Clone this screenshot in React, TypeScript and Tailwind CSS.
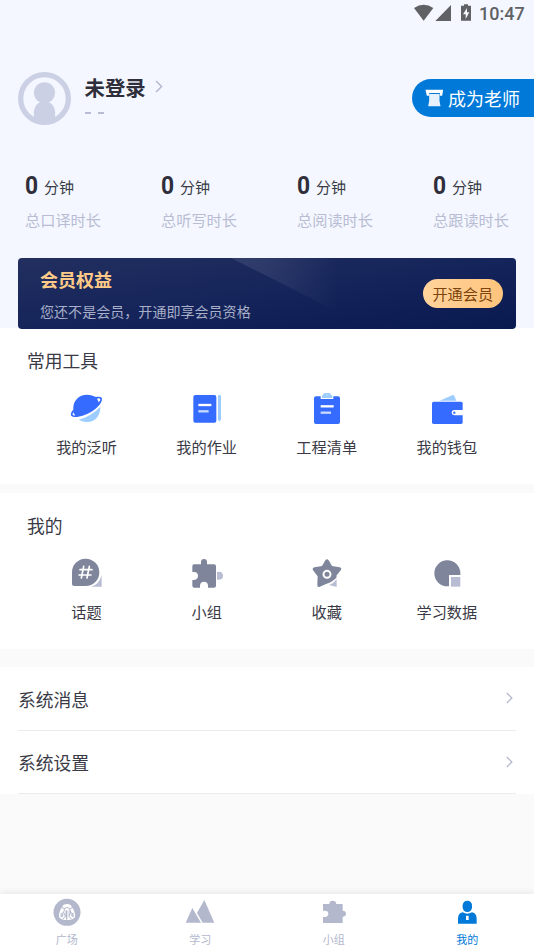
import React from "react";

const cjk = "font-['Noto_Sans_CJK_SC','Noto_Sans',sans-serif]";

function Chevron({ className }: { className: string }) {
  return (
    <svg viewBox="0 0 24 40" className={className} fill="none" stroke="#b4b8cd" strokeWidth="4.5">
      <path d="M3 3 L20 20 L3 37" />
    </svg>
  );
}

function StatusBar() {
  return (
    <div className="flex h-[27px] justify-end">
      <svg viewBox="40 0 180 81" className="h-[27px] w-[60px]" fill="#606164">
        <path d="M40 24 Q69 4 98 24 L69 62 Z" />
        <path d="M151 15 V63 H104 Z" />
        <path fillRule="evenodd" d="M190 13 H202 V17 H211 V62 H181 V17 H190 Z M199 24 L187 43 H195 V57 L206 37 H199 Z" />
      </svg>
      <span className="ml-[5.5px] w-[55px] font-['Roboto',sans-serif] text-[18px] font-medium leading-[27px] text-[#606164]">
        10:47
      </span>
    </div>
  );
}

function Profile() {
  return (
    <div className="mt-[45px] flex h-[53px] pl-[18px]">
      <svg viewBox="53 35 160 160" className="h-[53px] w-[53px]" fill="#cbd0e4">
        <circle cx="133" cy="115" r="72" fill="none" stroke="#cbd0e4" strokeWidth="16" />
        <circle cx="133" cy="98" r="32" />
        <path d="M101 188 V155 Q103 134 119 126 H147 Q163 134 165 155 V188 Q133 200 101 188 Z" />
      </svg>
      <div className="ml-[13.5px]">
        <div className="flex h-[29px] items-center">
          <span className="text-[20.4px] font-bold leading-[28px] text-[#2f2e3b]">未登录</span>
          <Chevron className="ml-[9px] h-[13px] w-[8px]" />
        </div>
        <div className="flex gap-[7px] pt-[11px]">
          <i className="h-[2px] w-[6px] bg-[#b9bdd3]" />
          <i className="h-[2px] w-[6px] bg-[#b9bdd3]" />
        </div>
      </div>
      <button className="ml-auto mt-[7px] flex h-[38px] w-[122.5px] items-center rounded-l-full bg-[#0079d9] pl-[13px] text-white">
        <svg viewBox="74 268 56 54" className="h-[18px] w-[19px]" fill="#fff">
          <path d="M75 270 H128 L125 288 H118 V280 H86 V288 H79 Z" />
          <path d="M86 283 H117 V304 L120 320 H83 L86 304 Z" fill="#e6f3ff" />
        </svg>
        <span className="ml-[4.5px] text-[18px] leading-[26px]">成为老师</span>
      </button>
    </div>
  );
}

function Stats() {
  return (
    <div className="mt-[43px] grid grid-cols-[repeat(4,136px)] pl-[25px]">
      {["总口译时长", "总听写时长", "总阅读时长", "总跟读时长"].map((label) => (
        <div key={label}>
          <div className="flex h-[34px] items-center">
            <b className="w-[13px] origin-left scale-x-[0.86] font-['Roboto',sans-serif] text-[26.5px] leading-[30px] text-[#2f2e3b]">0</b>
            <span className="ml-[6px] pt-[4px] text-[15px] leading-[22px] text-[#3a3a46]">分钟</span>
          </div>
          <div className="mt-[6px] text-[15.2px] leading-[22px] text-[#b9bdd3]">{label}</div>
        </div>
      ))}
    </div>
  );
}

function Banner() {
  return (
    <div className="relative mx-[18px] mt-[28px] flex h-[71px] items-center justify-between overflow-hidden rounded-[4px] bg-linear-to-br from-[#222f5f] via-[#15245a] to-[#091a50] pl-[22px] pr-[13px]">
      <svg viewBox="0 0 498 71" className="absolute inset-0 h-full w-full">
        <defs>
          <linearGradient id="beam" x1="0" x2="1">
            <stop offset="0" stopColor="#fff" stopOpacity="0.1" />
            <stop offset="0.35" stopColor="#fff" stopOpacity="0.08" />
            <stop offset="1" stopColor="#fff" stopOpacity="0" />
          </linearGradient>
        </defs>
        <path d="M213 0 H320 V54 Z" fill="url(#beam)" />
      </svg>
      <div className="relative -mt-px">
        <div className="text-[18px] font-bold leading-[26px] text-[#ffca87]">会员权益</div>
        <div className="mt-[9px] text-[14.05px] leading-[20px] text-[#a9afc8]">您还不是会员，开通即享会员资格</div>
      </div>
      <button className="relative -mt-px h-[29px] w-[80.5px] rounded-full bg-linear-to-r from-[#ffd39c] to-[#ffc47c] text-[15.2px] leading-[29px] text-[#7c430c]">
        开通会员
      </button>
    </div>
  );
}

const iconBox = "h-[40px] w-[40px]";

const PlanetIcon = () => (
  <svg viewBox="51 24 120 120" className={iconBox}>
    <path fill="#9dccff" d="M86 119 Q125 108 151 80 C152 108 134 126 112 126 Q97 126 86 119 Z" />
    <path fill="#356cff" d="M70 89 C68 62 87 44 111 44 C122 44 130 47 138 51 C148 49 156 50 156 57 C156 73 132 95 102 106 C82 113 65 113 63 106 C61 100 65 94 70 89 Z" />
    <path fill="#fff" d="M141 56 Q149 53 151 58 Q151 63 146 67 Q144 61 141 56 Z M70 97 Q72 103 76 106 Q69 107 68 104 Q67 101 70 97 Z" />
  </svg>
);
const HomeworkIcon = () => (
  <svg viewBox="411 24 120 120" className={iconBox}>
    <rect x="430" y="45" width="69" height="83" rx="6" fill="#356cff" />
    <path fill="#9dccff" d="M504 48 Q504 45 508.500 45 Q513 45 513 48 V118 L508.500 125 L504 118 Z" />
    <path stroke="#fff" strokeWidth="7" d="M445 75 H484" />
    <path stroke="#c9daff" strokeWidth="7" d="M445 94 H476" />
  </svg>
);
const ChecklistIcon = () => (
  <svg viewBox="51 24 120 120" className={iconBox}>
    <path fill="#356cff" d="M78 49 H92 V57 H130 V49 H144 Q150 49 150 55 V126 Q150 132 144 132 H78 Q72 132 72 126 V55 Q72 49 78 49 Z" />
    <path fill="#9dccff" d="M96 54 V46 H99 Q100 39 105 39 H117 Q122 39 123 46 H127 V54 Z" />
    <circle cx="111" cy="45" r="1.500" fill="#fff" />
    <path stroke="#fff" strokeWidth="7" d="M92 79 H131" />
    <path stroke="#c9daff" strokeWidth="7" d="M92 98 H123" />
  </svg>
);
const WalletIcon = () => (
  <svg viewBox="411 24 120 120" className={iconBox}>
    <path fill="#9dccff" d="M449 62 L488 45 Q491 44 493 48 L499 62 Z" />
    <rect x="426" y="65" width="92" height="67" rx="5" fill="#356cff" />
    <path fill="#fff" d="M519 90 H493 Q485 91 485 98.500 Q485 105 493 106 H519 Z" />
    <circle cx="493" cy="98" r="3.500" fill="#356cff" />
  </svg>
);
const TopicIcon = () => (
  <svg viewBox="51 24 120 120" className={iconBox}>
    <path fill="#b9bdd3" d="M155 90 V125 H124 Q148 118 155 90 Z" />
    <path fill="#7f859b" d="M66 83 A41 41 0 1 1 107 123 H72 Q66 123 66 117 Z" />
    <path fill="none" stroke="#fff" strokeWidth="5" strokeLinecap="round" d="M101 64 L94 99 M118 64 L111 99 M90 74 H126 M87 90 H123" />
  </svg>
);
const GroupIcon = () => (
  <svg viewBox="411 24 120 120" className={iconBox}>
    <path fill="#b9bdd3" d="M501 81 Q519 78 519 92.500 Q519 107 501 104 Z" />
    <path fill="#7f859b" d="M432 58 H453 V51 Q453 42 462 42 Q471 42 471 51 V58 H492 Q498 58 498 64 V122 Q498 128 492 128 H474 V121 Q473 110 462 110 Q451 110 450 121 V128 H433 Q427 128 427 122 V105 H432 Q444 104 444 92.500 Q444 82 432 81 H427 V64 Q427 58 432 58 Z" />
  </svg>
);
const FavoriteIcon = () => (
  <svg viewBox="51 24 120 120" className={iconBox}>
    <path fill="#b9bdd3" d="M140 103 V126 L117 120 Q132 115 140 103 Z" />
    <path fill="#7f859b" d="M106 46 Q111 39 116 46 L126 63 L149 67 Q157 70 152 76 L139 92 L140 97 Q131 110 108 117 L88 126 Q81 127 82 119 L83 94 L69 76 Q66 69 73 67 L96 63 Z" />
    <circle cx="111" cy="88" r="10.500" fill="none" stroke="#fff" strokeWidth="6" />
  </svg>
);
const DataIcon = () => (
  <svg viewBox="411 24 120 120" className={iconBox}>
    <path fill="#7f859b" d="M477 124 H474 A39 39 0 1 1 511 85 V90 H477 Z" />
    <rect x="483" y="96" width="28" height="29" fill="#b9bdd3" />
  </svg>
);

function ToolSection({ title, items }: { title: string; items: [string, React.FC][] }) {
  return (
    <section className="h-[156px] bg-white pt-[19px]">
      <h2 className="pl-[27px] text-[17.8px] leading-[26px] text-[#3a3a46]">{title}</h2>
      <div className="mt-[15px] grid grid-cols-[repeat(4,120.1px)] pl-[26.5px]">
        {items.map(([label, Icon]) => (
          <div key={label} className="flex flex-col items-center">
            <Icon />
            <span className="mt-[7px] text-[15.2px] leading-[22px] text-[#3a3a46]">{label}</span>
          </div>
        ))}
      </div>
    </section>
  );
}

function SettingRow({ label }: { label: string }) {
  return (
    <div className="mx-[18px] flex h-[63.500px] items-center justify-between border-b border-[#ebebed] pr-[3px]">
      <span className="pt-px text-[17.8px] leading-[26px] text-[#3a3a46]">{label}</span>
      <Chevron className="h-[12px] w-[7px]" />
    </div>
  );
}

const SquareTab = () => (
  <svg viewBox="152 33 96 96" className="h-[32px] w-[32px]">
    <circle cx="200" cy="82" r="40.500" fill="#b3b8cd" />
    <path fill="#fff" d="M189 60 Q200 54 211 60 L220 75 Q227 89 223 98 Q214 107 200 105 Q187 107 177 98 Q174 89 180 75 Z" />
    <g fill="none" stroke="#b3b8cd" strokeWidth="3">
      <path d="M185 68 L193 71 L200 67 L208 71 L216 68 M193 71 L190 82 L180 88 M208 71 L211 82 L221 88 M190 82 L195 94 L187 103 M211 82 L206 94 L214 103" />
    </g>
    <path fill="#b3b8cd" d="M196 76 H201 V104 H198 L195 92 Z M205 76 H208 V91 L205 95 Z M181 91 L190 85 L188 93 L181 98 Z M213 85 L220 91 V97 L213 93 Z" />
  </svg>
);
const StudyTab = () => (
  <svg viewBox="552 33 96 96" className="h-[32px] w-[32px]" fill="#b3b8cd">
    <path d="M577 69 L603 113 H557 Z" />
    <path d="M613 45 L643 113 H608 L591 84 Z" />
  </svg>
);
const GroupTab = () => (
  <svg viewBox="152 33 96 96" className="h-[32px] w-[32px]" fill="#b3b8cd">
    <path d="M167 57 H186 Q186 47 196 47 Q206 47 207 57 H226 V77 Q236 77 236 86 Q236 94 226 95 V114 H167 V96 H173 Q183 95 183 86 Q183 77 173 77 H167 Z" />
  </svg>
);
const MineTab = () => (
  <svg viewBox="552 33 96 96" className="h-[32px] w-[32px]" fill="#0079d9">
    <rect x="587" y="47" width="28" height="34" rx="14" />
    <path fillRule="evenodd" d="M587 82 Q601 90 615 82 Q629 85 629 101 V116 H573 V101 Q573 85 587 82 Z M597 92 V105 H605 V92 Z" />
  </svg>
);

function TabBar() {
  const tabs: [string, React.FC, string][] = [
    ["广场", SquareTab, "text-[#b3b8cd]"],
    ["学习", StudyTab, "text-[#b3b8cd]"],
    ["小组", GroupTab, "text-[#b3b8cd]"],
    ["我的", MineTab, "text-[#0079d9]"],
  ];
  return (
    <nav className="grid h-[56px] grid-cols-4 bg-white pt-[2px] shadow-[0_-1px_7px_rgba(0,0,0,0.09)]">
      {tabs.map(([label, Icon, color]) => (
        <div key={label} className="flex flex-col items-center">
          <Icon />
          <span className={`mt-[3px] text-[11px] leading-[16px] ${color}`}>{label}</span>
        </div>
      ))}
    </nav>
  );
}

export default function App() {
  return (
    <div className={`flex h-[950px] w-[534px] flex-col overflow-hidden bg-[#fafafa] ${cjk}`}>
      <header className="h-[328px] bg-[#f4f7ff]">
        <StatusBar />
        <Profile />
        <Stats />
        <Banner />
      </header>
      <ToolSection
        title="常用工具"
        items={[["我的泛听", PlanetIcon], ["我的作业", HomeworkIcon], ["工程清单", ChecklistIcon], ["我的钱包", WalletIcon]]}
      />
      <div className="mt-[9px]">
        <ToolSection
          title="我的"
          items={[["话题", TopicIcon], ["小组", GroupIcon], ["收藏", FavoriteIcon], ["学习数据", DataIcon]]}
        />
      </div>
      <div className="mt-[18px] bg-white">
        <SettingRow label="系统消息" />
        <SettingRow label="系统设置" />
      </div>
      <div className="flex-1" />
      <TabBar />
    </div>
  );
}
